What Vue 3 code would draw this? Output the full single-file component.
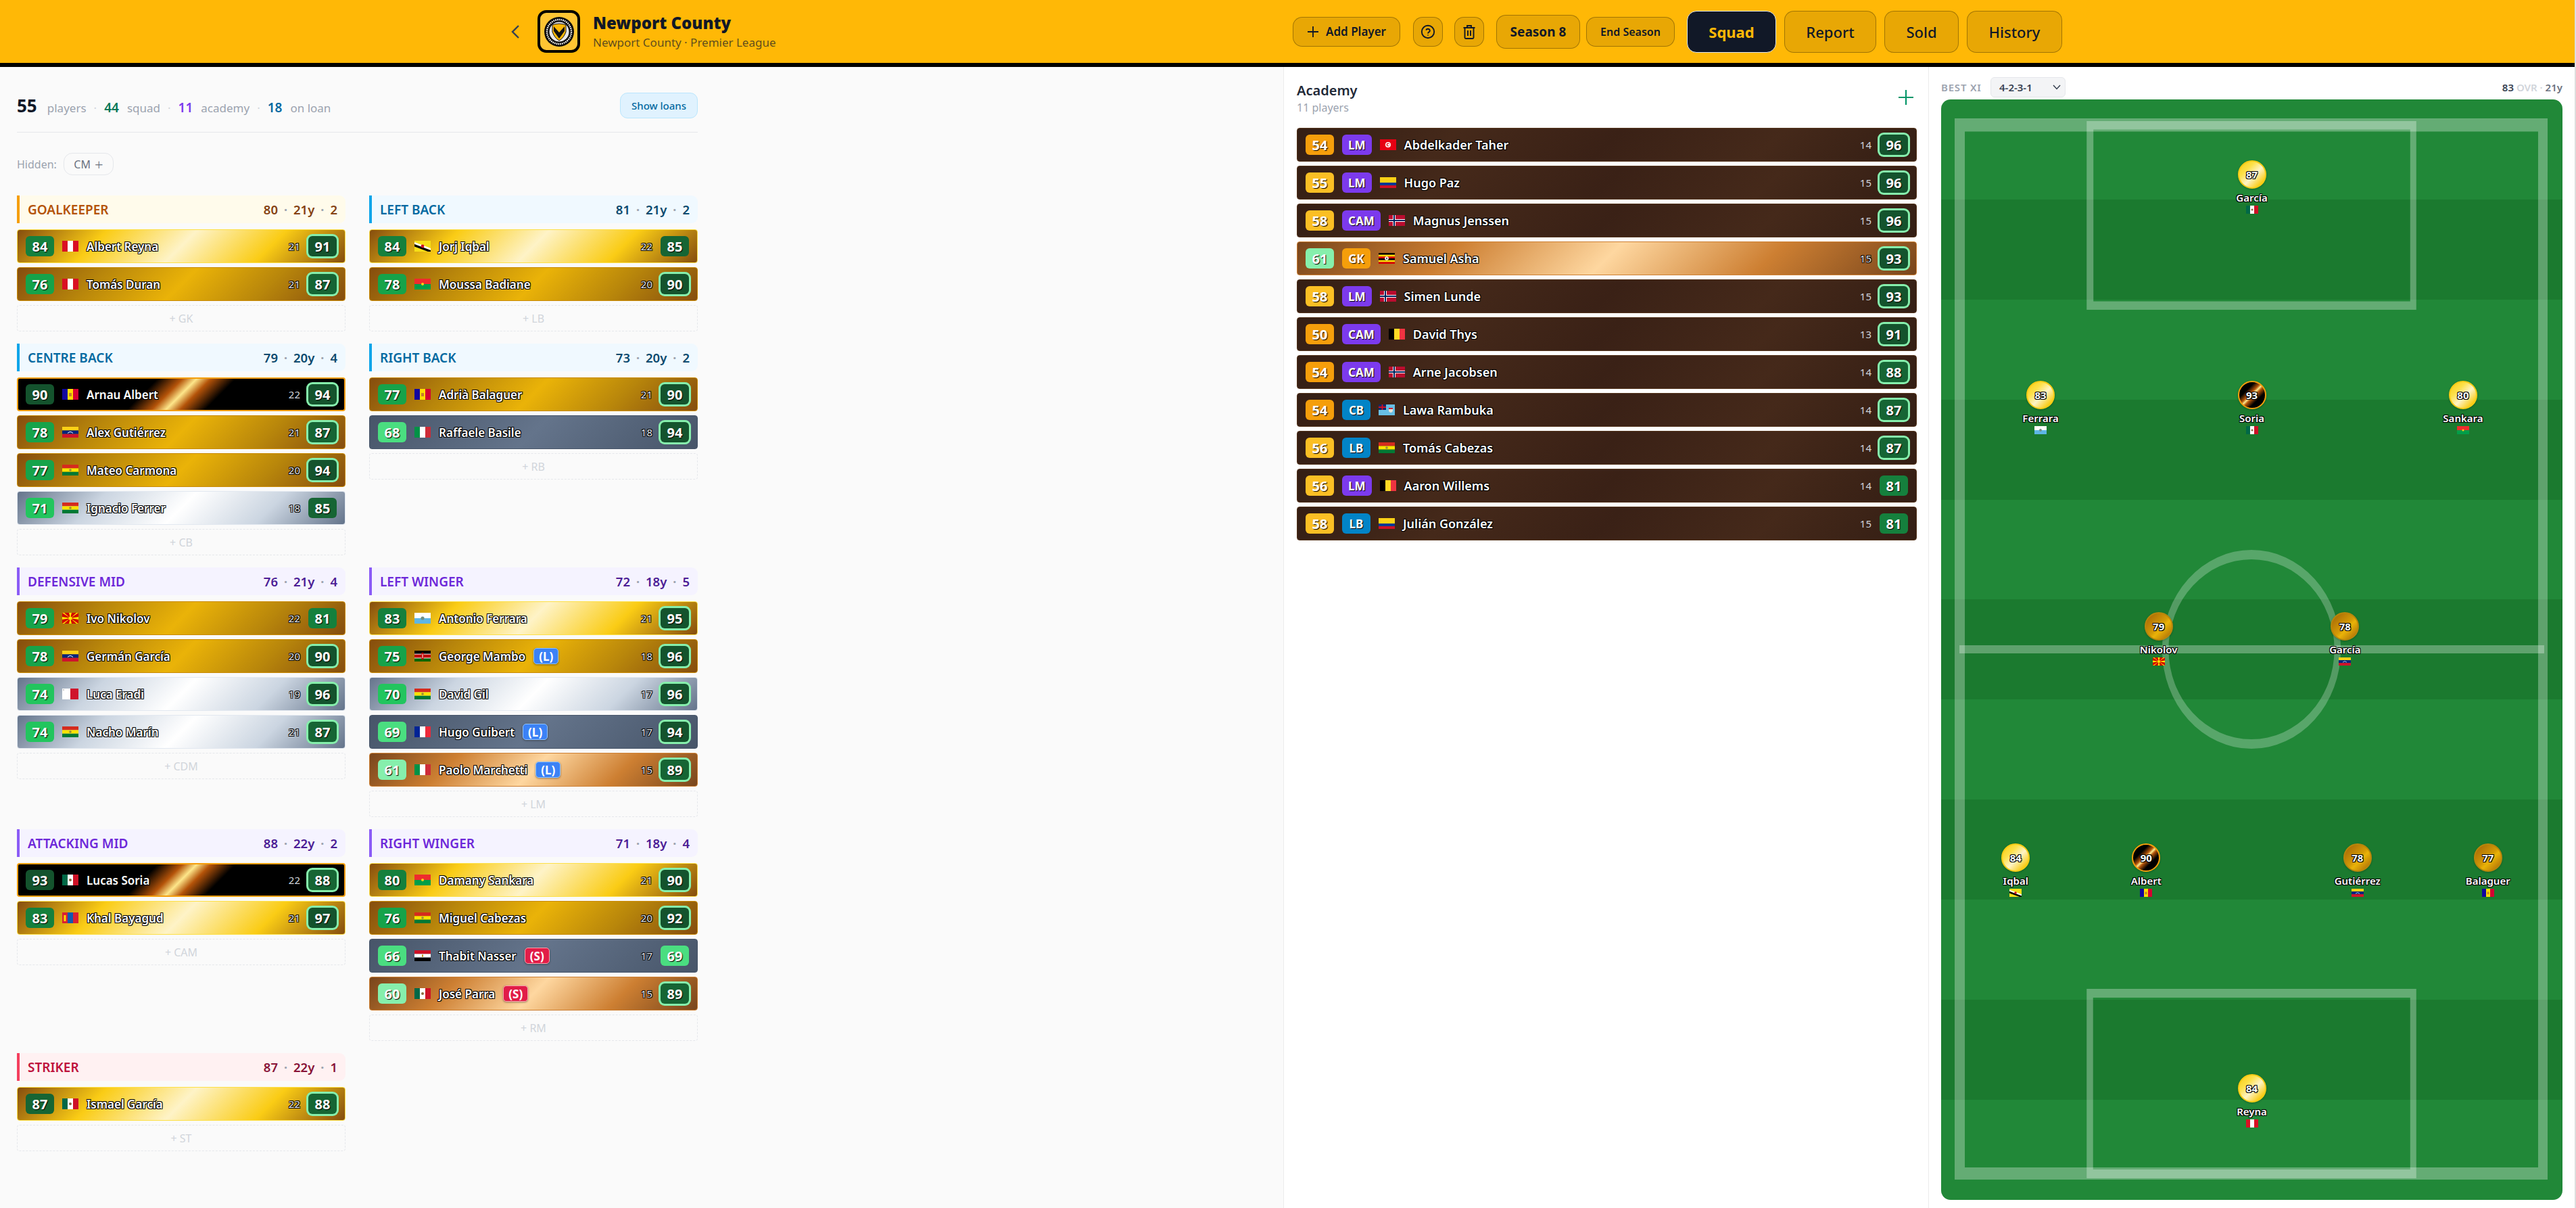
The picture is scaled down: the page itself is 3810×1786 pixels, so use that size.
<script setup>
import { h } from 'vue'

const flagShapes = {
  pe: [['r', 0, 0, 24, 16, '#fff'], ['r', 0, 0, 8, 16, '#d91023'], ['r', 16, 0, 8, 16, '#d91023']],
  it: [['r', 0, 0, 8, 16, '#009246'], ['r', 8, 0, 8, 16, '#fff'], ['r', 16, 0, 8, 16, '#ce2b37']],
  fr: [['r', 0, 0, 8, 16, '#002395'], ['r', 8, 0, 8, 16, '#fff'], ['r', 16, 0, 8, 16, '#ed2939']],
  be: [['r', 0, 0, 8, 16, '#000'], ['r', 8, 0, 8, 16, '#fdda24'], ['r', 16, 0, 8, 16, '#ef3340']],
  mt: [['r', 0, 0, 12, 16, '#fff'], ['r', 12, 0, 12, 16, '#cf142b'], ['r', 1, 1, 2, 2, '#ccc']],
  ad: [['r', 0, 0, 8, 16, '#10069f'], ['r', 8, 0, 8, 16, '#fedd00'], ['r', 16, 0, 8, 16, '#d50032'], ['r', 10, 6, 4, 5, '#c7802a']],
  mx: [['r', 0, 0, 8, 16, '#006847'], ['r', 8, 0, 8, 16, '#fff'], ['r', 16, 0, 8, 16, '#ce1126'], ['c', 12, 8, 2, '#8c6a3f']],
  mn: [['r', 0, 0, 8, 16, '#da2032'], ['r', 8, 0, 8, 16, '#0f5ab0'], ['r', 16, 0, 8, 16, '#da2032'], ['r', 2.5, 4, 3, 9, '#ffd900']],
  bf: [['r', 0, 0, 24, 8, '#ef2b2d'], ['r', 0, 8, 24, 8, '#009e49'], ['c', 12, 8, 2, '#fcd116']],
  bo: [['r', 0, 0, 24, 5.4, '#d52b1e'], ['r', 0, 5.4, 24, 5.3, '#f9e300'], ['r', 0, 10.7, 24, 5.3, '#007934'], ['c', 12, 8, 1.8, '#9a8a3a']],
  ve: [['r', 0, 0, 24, 5.4, '#fcd116'], ['r', 0, 5.4, 24, 5.3, '#00247d'], ['r', 0, 10.7, 24, 5.3, '#cf142b'], ['p', 'M8 9.5 Q12 5.5 16 9.5', 'none', '#fff']],
  co: [['r', 0, 0, 24, 8, '#fcd116'], ['r', 0, 8, 24, 4, '#003893'], ['r', 0, 12, 24, 4, '#ce1126']],
  eg: [['r', 0, 0, 24, 5.4, '#ce1126'], ['r', 0, 5.4, 24, 5.3, '#fff'], ['r', 0, 10.7, 24, 5.3, '#000'], ['r', 11, 6.4, 2, 3.2, '#c09300']],
  sm: [['r', 0, 0, 24, 8, '#fff'], ['r', 0, 8, 24, 8, '#5eb6e4'], ['c', 12, 8, 2.6, '#6f8f86']],
  tn: [['r', 0, 0, 24, 16, '#e70013'], ['c', 12, 8, 4, '#fff'], ['c', 12, 8, 2.4, '#e70013'], ['c', 12.6, 8, 1.6, '#fff']],
  ug: [['r', 0, 0, 24, 2.7, '#000'], ['r', 0, 2.7, 24, 2.7, '#fcdc04'], ['r', 0, 5.4, 24, 2.6, '#d90000'], ['r', 0, 8, 24, 2.7, '#000'], ['r', 0, 10.7, 24, 2.7, '#fcdc04'], ['r', 0, 13.4, 24, 2.6, '#d90000'], ['c', 12, 8, 2.8, '#fff'], ['c', 12, 8, 1.2, '#555']],
  no: [['r', 0, 0, 24, 16, '#ba0c2f'], ['r', 6, 0, 4, 16, '#fff'], ['r', 0, 6, 24, 4, '#fff'], ['r', 7, 0, 2, 16, '#00205b'], ['r', 0, 7, 24, 2, '#00205b']],
  ke: [['r', 0, 0, 24, 16, '#fff'], ['r', 0, 0, 24, 4.6, '#000'], ['r', 0, 5.6, 24, 4.8, '#bb0000'], ['r', 0, 11.4, 24, 4.6, '#006600'], ['r', 10.5, 3, 3, 10, '#bb0000'], ['r', 11.5, 5, 1, 6, '#fff']],
  mk: [['r', 0, 0, 24, 16, '#d20000'], ['p', 'M10 0h4l-2 8zM10 16h4l-2-8zM0 6v4l12-2zM24 6v4L12 8zM0 0h3l9 8zM24 0h-3l-9 8zM0 16h3l9-8zM24 16h-3l-9-8z', '#ffe600'], ['c', 12, 8, 2.6, '#ffe600']],
  bn: [['r', 0, 0, 24, 16, '#f7e017'], ['p', 'M0 2 L24 11 V14 L0 5z', '#fff'], ['p', 'M0 5 L24 14 V16 H20 L0 8.5z', '#000'], ['c', 12, 8, 2.4, '#cf1126']],
  fj: [['r', 0, 0, 24, 16, '#68bfe5'], ['r', 0, 0, 11, 8, '#002868'], ['r', 4.5, 0, 2, 8, '#ce1126'], ['r', 0, 3, 11, 2, '#ce1126'], ['p', 'M15 5h6v5q-3 4-6 0z', '#e8e4d8'], ['r', 15, 5, 6, 1.8, '#ce1126']]
}

const Flag = (props) => h('svg', { class: 'flag', viewBox: '0 0 24 16', preserveAspectRatio: 'none' },
  (flagShapes[props.code] || []).map((s) => {
    if (s[0] === 'r') return h('rect', { x: s[1], y: s[2], width: s[3], height: s[4], fill: s[5] })
    if (s[0] === 'c') return h('circle', { cx: s[1], cy: s[2], r: s[3], fill: s[4] })
    return h('path', { d: s[1], fill: s[2], stroke: s[3] || 'none', 'stroke-width': s[3] ? 1 : 0 })
  })
)

function tier(ovr) {
  if (ovr >= 90) return 'icon'
  if (ovr >= 80) return 'gold'
  if (ovr >= 75) return 'gold-low'
  if (ovr >= 70) return 'silver'
  if (ovr >= 65) return 'silver-low'
  if (ovr >= 60) return 'bronze'
  return 'bronze-low'
}

function ratingColor(v) {
  if (v >= 90) return '#14532d'
  if (v >= 85) return '#166534'
  if (v >= 80) return '#15803d'
  if (v >= 75) return '#16a34a'
  if (v >= 70) return '#22c55e'
  if (v >= 65) return '#4ade80'
  if (v >= 60) return '#86efac'
  if (v >= 55) return '#fbbf24'
  return '#f59e0b'
}

const p = (ovr, name, flag, age, pot, tag, pos) => ({ ovr, name, flag, age, pot, tag, pos })

const sections = [
  { title: 'Goalkeeper', theme: 'amber', avg: 80, age: '21y', n: 2, slot: 'GK', players: [
    p(84, 'Albert Reyna', 'pe', 21, 91), p(76, 'Tomás Duran', 'pe', 21, 87)] },
  { title: 'Left Back', theme: 'sky', avg: 81, age: '21y', n: 2, slot: 'LB', players: [
    p(84, 'Jorj Iqbal', 'bn', 22, 85), p(78, 'Moussa Badiane', 'bf', 20, 90)] },
  { title: 'Centre Back', theme: 'sky', avg: 79, age: '20y', n: 4, slot: 'CB', players: [
    p(90, 'Arnau Albert', 'ad', 22, 94), p(78, 'Alex Gutiérrez', 've', 21, 87),
    p(77, 'Mateo Carmona', 'bo', 20, 94), p(71, 'Ignacio Ferrer', 'bo', 18, 85)] },
  { title: 'Right Back', theme: 'sky', avg: 73, age: '20y', n: 2, slot: 'RB', players: [
    p(77, 'Adrià Balaguer', 'ad', 21, 90), p(68, 'Raffaele Basile', 'it', 18, 94)] },
  { title: 'Defensive Mid', theme: 'violet', avg: 76, age: '21y', n: 4, slot: 'CDM', players: [
    p(79, 'Ivo Nikolov', 'mk', 22, 81), p(78, 'Germán García', 've', 20, 90),
    p(74, 'Luca Eradi', 'mt', 19, 96), p(74, 'Nacho Marín', 'bo', 21, 87)] },
  { title: 'Left Winger', theme: 'violet', avg: 72, age: '18y', n: 5, slot: 'LM', players: [
    p(83, 'Antonio Ferrara', 'sm', 21, 95), p(75, 'George Mambo', 'ke', 18, 96, 'L'),
    p(70, 'David Gil', 'bo', 17, 96), p(69, 'Hugo Guibert', 'fr', 17, 94, 'L'),
    p(61, 'Paolo Marchetti', 'it', 15, 89, 'L')] },
  { title: 'Attacking Mid', theme: 'violet', avg: 88, age: '22y', n: 2, slot: 'CAM', players: [
    p(93, 'Lucas Soria', 'mx', 22, 88), p(83, 'Khal Bayagud', 'mn', 21, 97)] },
  { title: 'Right Winger', theme: 'violet', avg: 71, age: '18y', n: 4, slot: 'RM', players: [
    p(80, 'Damany Sankara', 'bf', 21, 90), p(76, 'Miguel Cabezas', 'bo', 20, 92),
    p(66, 'Thabit Nasser', 'eg', 17, 69, 'S'), p(60, 'José Parra', 'mx', 15, 89, 'S')] },
  { title: 'Striker', theme: 'rose', avg: 87, age: '22y', n: 1, slot: 'ST', players: [
    p(87, 'Ismael García', 'mx', 22, 88)] }
]

const academy = [
  p(54, 'Abdelkader Taher', 'tn', 14, 96, null, 'LM'),
  p(55, 'Hugo Paz', 'co', 15, 96, null, 'LM'),
  p(58, 'Magnus Jenssen', 'no', 15, 96, null, 'CAM'),
  p(61, 'Samuel Asha', 'ug', 15, 93, null, 'GK'),
  p(58, 'Simen Lunde', 'no', 15, 93, null, 'LM'),
  p(50, 'David Thys', 'be', 13, 91, null, 'CAM'),
  p(54, 'Arne Jacobsen', 'no', 14, 88, null, 'CAM'),
  p(54, 'Lawa Rambuka', 'fj', 14, 87, null, 'CB'),
  p(56, 'Tomás Cabezas', 'bo', 14, 87, null, 'LB'),
  p(56, 'Aaron Willems', 'be', 14, 81, null, 'LM'),
  p(58, 'Julián González', 'co', 15, 81, null, 'LB')
]

const posColor = { LM: '#7c3aed', CAM: '#7c3aed', GK: '#f59e0b', CB: '#0284c7', LB: '#0284c7' }

const xi = [
  { name: 'García', ovr: 87, flag: 'mx', x: 50, y: 6.85 },
  { name: 'Ferrara', ovr: 83, flag: 'sm', x: 16, y: 26.85 },
  { name: 'Soria', ovr: 93, flag: 'mx', x: 50, y: 26.85 },
  { name: 'Sankara', ovr: 80, flag: 'bf', x: 84, y: 26.85 },
  { name: 'Nikolov', ovr: 79, flag: 'mk', x: 35, y: 47.85 },
  { name: 'García', ovr: 78, flag: 've', x: 65, y: 47.85 },
  { name: 'Iqbal', ovr: 84, flag: 'bn', x: 12, y: 68.9 },
  { name: 'Albert', ovr: 90, flag: 'ad', x: 33, y: 68.9 },
  { name: 'Gutiérrez', ovr: 78, flag: 've', x: 67, y: 68.9 },
  { name: 'Balaguer', ovr: 77, flag: 'ad', x: 88, y: 68.9 },
  { name: 'Reyna', ovr: 84, flag: 'pe', x: 50, y: 89.85 }
]
</script>

<template>
  <div class="app">
    <header class="topbar">
      <div class="club">
        <svg class="back" viewBox="0 0 12 20" fill="none" stroke="#374151" stroke-width="2.4">
          <path d="M11 1 2 10l9 9" />
        </svg>
        <div class="crest">
          <svg viewBox="0 0 46 46" width="46" height="46">
            <circle cx="23" cy="23" r="22" fill="#0b0b0b" />
            <circle cx="23" cy="23" r="18" fill="none" stroke="#fff" stroke-width="2.4" stroke-dasharray="1.6 1.2" />
            <circle cx="23" cy="23" r="14.5" fill="#e8e8e8" />
            <path d="M13 13q10-4 20 0v10q-3 9-10 13-7-4-10-13z" fill="#ffb806" stroke="#111" stroke-width="1" />
            <path d="M15 15l8 9 8-9v7l-8 11-8-11z" fill="#111" />
          </svg>
        </div>
        <div class="club-text">
          <div class="club-name">Newport County</div>
          <div class="club-sub">Newport County · Premier League</div>
        </div>
      </div>
      <nav class="actions">
        <button class="btn add">
          <svg viewBox="0 0 18 18" width="18" height="18" fill="none" stroke="#111827" stroke-width="1.8"><path d="M9 1v16M1 9h16" /></svg>
          Add Player
        </button>
        <button class="btn square ml7">
          <svg viewBox="0 0 22 22" width="22" height="22" fill="none" stroke="#111827" stroke-width="1.9">
            <circle cx="11" cy="11" r="9.2" />
            <path d="M8.2 8.6a2.9 2.9 0 0 1 5.6.8c0 1.9-2.8 2.3-2.8 4" />
            <path d="M11 15.6v.9" />
          </svg>
        </button>
        <button class="btn square ml5">
          <svg viewBox="0 0 20 22" width="20" height="22" fill="none" stroke="#111827" stroke-width="1.9">
            <path d="M1.5 5h17M7 5V2h6v3M3.5 5v14.5a1.5 1.5 0 0 0 1.5 1.5h10a1.5 1.5 0 0 0 1.5-1.5V5M8 9v8M12 9v8" />
          </svg>
        </button>
        <div class="btn season ml6">Season 8</div>
        <button class="btn end">End Season</button>
        <button class="tab active ml6">Squad</button>
        <button class="tab report">Report</button>
        <button class="tab sold">Sold</button>
        <button class="tab hist">History</button>
      </nav>
    </header>

    <main class="body">
      <section class="squad-panel">
        <div class="squad-inner">
          <div class="summary">
            <div class="counts">
              <b class="total">55</b><span class="lbl">players</span><i class="sep">·</i>
              <b class="c-green">44</b><span class="lbl">squad</span><i class="sep">·</i>
              <b class="c-violet">11</b><span class="lbl">academy</span><i class="sep">·</i>
              <b class="c-blue">18</b><span class="lbl">on loan</span>
            </div>
            <button class="loans">Show loans</button>
          </div>
          <div class="hidden-row">
            <span>Hidden:</span>
            <span class="chip">CM <em>+</em></span>
          </div>
          <div class="grid">
            <div v-for="s in sections" :key="s.title" class="group">
              <div class="group-head" :class="s.theme">
                <span class="group-title">{{ s.title }}</span>
                <span class="group-stats">{{ s.avg }}<i>·</i>{{ s.age }}<i>·</i>{{ s.n }}</span>
              </div>
              <div class="rows">
                <div v-for="pl in s.players" :key="pl.name" class="row" :class="tier(pl.ovr)">
                  <span class="num" :style="{ background: ratingColor(pl.ovr) }">{{ pl.ovr }}</span>
                  <Flag :code="pl.flag" />
                  <span class="name">{{ pl.name }}</span>
                  <span v-if="pl.tag" class="tag" :class="pl.tag === 'L' ? 'loan' : 'sale'">({{ pl.tag }})</span>
                  <span class="age">{{ pl.age }}</span>
                  <span class="num pot" :class="{ ring: pl.pot >= 86 }" :style="{ background: ratingColor(pl.pot) }">{{ pl.pot }}</span>
                </div>
                <div class="slot">+ {{ s.slot }}</div>
              </div>
            </div>
          </div>
        </div>
      </section>

      <section class="academy-panel">
        <div class="academy-head">
          <div>
            <div class="academy-title">Academy</div>
            <div class="academy-sub">11 players</div>
          </div>
          <svg class="academy-add" viewBox="0 0 24 24" width="24" height="24" fill="none" stroke="#059669" stroke-width="2.2"><path d="M12 1v22M1 12h22" /></svg>
        </div>
        <div class="academy-rows">
          <div v-for="pl in academy" :key="pl.name" class="row" :class="tier(pl.ovr)">
            <span class="num" :style="{ background: ratingColor(pl.ovr) }">{{ pl.ovr }}</span>
            <span class="pos" :style="{ background: posColor[pl.pos] }">{{ pl.pos }}</span>
            <Flag :code="pl.flag" />
            <span class="name">{{ pl.name }}</span>
            <span class="age">{{ pl.age }}</span>
            <span class="num pot" :class="{ ring: pl.pot >= 86 }" :style="{ background: ratingColor(pl.pot) }">{{ pl.pot }}</span>
          </div>
        </div>
      </section>

      <section class="xi-panel">
        <div class="xi-head">
          <span class="xi-label">BEST XI</span>
          <div class="formation">
            <span>4-2-3-1</span>
            <svg viewBox="0 0 12 8" width="12" height="8" fill="none" stroke="#374151" stroke-width="1.5"><path d="M1 1l5 5.5L11 1" /></svg>
          </div>
          <span class="xi-stats"><b>83</b> <span class="ovr">OVR</span> <span class="ovr">·</span> <span class="yrs">21y</span></span>
        </div>
        <div class="pitch">
          <svg class="lines" viewBox="0 0 918 1627" preserveAspectRatio="none">
            <path fill-rule="evenodd" d="M20 28H896V1597H20ZM35 47.500V1579H882V47.500Z" />
            <path fill-rule="evenodd" d="M215 32H702V311H215ZM225 44.500V298.500H693V44.500Z" />
            <path fill-rule="evenodd" d="M215 1315H702V1595H215ZM224.500 1328V1582H693V1328Z" />
            <path d="M27 807H891V819H27Z" />
            <path fill-rule="evenodd" class="circle" d="M326.500 813a132 147 0 1 0 264 0a132 147 0 1 0-264 0ZM336 813a122.500 133 0 1 0 245 0a122.500 133 0 1 0-245 0Z" />
          </svg>
          <div v-for="t in xi" :key="t.name + t.ovr" class="token" :style="{ left: t.x + '%', top: t.y + '%' }">
            <div class="coin" :class="tier(t.ovr)"><span>{{ t.ovr }}</span></div>
            <div class="token-name">{{ t.name }}</div>
            <Flag :code="t.flag" />
          </div>
        </div>
      </section>
    </main>
  </div>
</template>

<style>
html, body {
  margin: 0;
  background: #dedede;
}
</style>

<style scoped>
.app {
  width: 3808px;
  height: 1786px;
  display: flex;
  flex-direction: column;
  overflow: hidden;
  font-family: "Noto Sans", "Open Sans", sans-serif;
  background: #fff;
  color: #111827;
}

.topbar {
  height: 93px;
  flex: none;
  box-sizing: content-box;
  border-bottom: 6px solid #000;
  background: #ffb806;
  display: flex;
  align-items: center;
  justify-content: space-between;
  padding: 0 758px 0 756px;
}
.club {
  display: flex;
  align-items: center;
}
.back {
  width: 12px;
  height: 20px;
  margin-right: 27px;
}
.crest {
  width: 63px;
  height: 63px;
  box-sizing: border-box;
  border: 4px solid #000;
  border-radius: 13px;
  background: #ffc533;
  display: flex;
  align-items: center;
  justify-content: center;
  margin-right: 19px;
}
.club-name {
  font-size: 24px;
  font-weight: 900;
  line-height: 30px;
  color: #111827;
}
.club-sub {
  font-size: 17px;
  line-height: 22px;
  margin-top: 3px;
  color: rgba(17, 24, 39, 0.7);
}
.actions {
  display: flex;
  align-items: center;
  gap: 12px;
}
.ml5 { margin-left: 5px; }
.ml6 { margin-left: 6px; }
.ml7 { margin-left: 7px; }
.btn, .tab {
  font-family: inherit;
  box-sizing: border-box;
  background: rgba(0, 0, 0, 0.09);
  border: 1px solid rgba(0, 0, 0, 0.3);
  border-radius: 14px;
  color: #111827;
  display: flex;
  align-items: center;
  justify-content: center;
  padding: 0;
}
.btn {
  height: 44px;
  font-size: 17px;
  font-weight: 600;
}
.add {
  width: 159px;
  gap: 10px;
}
.square {
  width: 44px;
}
.season {
  width: 124px;
  height: 50px;
  font-size: 19px;
  font-weight: 700;
}
.end {
  width: 131px;
  margin-left: -3px;
  font-size: 16px;
}
.tab {
  height: 62px;
  font-size: 22px;
  font-weight: 500;
}
.tab.active {
  width: 132px;
  background: #111827;
  color: #ffb806;
  font-weight: 700;
  border: 1px solid #e5e7eb;
}
.tab.report { width: 136px; }
.tab.sold { width: 110px; }
.tab.hist { width: 141px; }

.body {
  flex: 1;
  display: flex;
  min-height: 0;
}
.squad-panel {
  width: 1899px;
  flex: none;
  box-sizing: border-box;
  background: #fafafa;
  border-right: 1px solid #ececec;
  padding: 38px 0 0 25px;
}
.squad-inner {
  width: 1007px;
}
.summary {
  display: flex;
  align-items: center;
  justify-content: space-between;
  height: 59px;
  padding-bottom: 21px;
  box-sizing: border-box;
  border-bottom: 1px solid #e5e7eb;
}
.counts {
  display: flex;
  align-items: baseline;
  font-size: 17px;
}
.counts b {
  font-weight: 600;
  font-size: 19px;
  margin-right: 12px;
}
.counts .total {
  font-size: 26px;
  font-weight: 700;
  color: #111827;
  margin-right: 15px;
}
.lbl {
  color: #9ca3af;
}
.sep {
  font-style: normal;
  color: #d1d5db;
  margin: 0 11px;
}
.c-green { color: #047857; }
.c-violet { color: #7c3aed; }
.c-blue { color: #0369a1; }
.loans {
  width: 115px;
  height: 38px;
  font-family: inherit;
  font-size: 15px;
  font-weight: 500;
  color: #0369a1;
  background: #e0f2fe;
  border: 1px solid #bae6fd;
  border-radius: 11px;
  padding: 0;
}
.hidden-row {
  display: flex;
  align-items: center;
  gap: 10px;
  margin-top: 30px;
  height: 33px;
  font-size: 16px;
  color: #9ca3af;
}
.chip {
  width: 74px;
  height: 33px;
  box-sizing: border-box;
  border: 1px solid #e5e7eb;
  border-radius: 13px;
  display: flex;
  align-items: center;
  justify-content: center;
  gap: 6px;
  color: #6b7280;
  background: #fafafa;
}
.chip em {
  font-style: normal;
  font-size: 22px;
  line-height: 1;
  font-weight: 300;
}
.grid {
  margin-top: 30px;
  display: grid;
  grid-template-columns: 486px 486px;
  column-gap: 35px;
  row-gap: 18px;
  align-items: start;
}
.group-head {
  height: 41px;
  box-sizing: border-box;
  border-left: 4px solid;
  border-radius: 0 9px 9px 0;
  display: flex;
  align-items: center;
  justify-content: space-between;
  padding: 0 12px 0 12px;
  margin-bottom: 9px;
}
.group-title {
  text-transform: uppercase;
  font-size: 19px;
  font-weight: 600;
}
.group-stats {
  font-size: 18.500px;
  font-weight: 600;
}
.group-stats i {
  font-style: normal;
  color: #9ca3af;
  margin: 0 9px;
  font-weight: 700;
  font-size: 18px;
}
.amber { background: #fffbeb; border-color: #f59e0b; }
.amber .group-title { color: #b45309; }
.amber .group-stats { color: #854213; }
.sky { background: #f0f9ff; border-color: #0ea5e9; }
.sky .group-title { color: #0369a1; }
.sky .group-stats { color: #0c4a6e; }
.violet { background: #f5f3ff; border-color: #8b5cf6; }
.violet .group-title { color: #6d28d9; }
.violet .group-stats { color: #4c1d95; }
.rose { background: #fff1f2; border-color: #f43f5e; }
.rose .group-title { color: #be123c; }
.rose .group-stats { color: #881337; }

.rows, .academy-rows {
  display: flex;
  flex-direction: column;
  gap: 6px;
}
.row {
  height: 50px;
  box-sizing: border-box;
  border: 1px solid;
  border-radius: 4px;
  display: flex;
  align-items: center;
  padding: 0 12px;
  color: #fff;
  flex: none;
}
.row.gold {
  background: linear-gradient(135deg, #854d0e 0%, #facc15 25%, #fef3c7 50%, #facc15 75%, #854d0e 100%);
  border-color: #fde047;
}
.row.gold-low {
  background: linear-gradient(135deg, #854d0e 0%, #b8860b 25%, #eab308 50%, #b8860b 75%, #854d0e 100%);
  border-color: #ca8a04;
}
.row.silver {
  background: linear-gradient(135deg, #64748b 0%, #cbd5e1 25%, #ffffff 50%, #cbd5e1 75%, #64748b 100%);
  border-color: #e2e8f0;
}
.row.silver-low {
  background: linear-gradient(135deg, #475569 0%, #64748b 50%, #475569 100%);
  border-color: #475569;
}
.row.bronze {
  background: linear-gradient(135deg, #78451c 0%, #cd7f32 25%, #fed7a0 50%, #cd7f32 75%, #78451c 100%);
  border-color: #cd7f32;
}
.row.bronze-low {
  background: linear-gradient(135deg, #341e14 0%, #45291a 25%, #3a2116 50%, #45291a 75%, #341e14 100%);
  border-color: #54341c;
}
.row.icon {
  background: linear-gradient(135deg, #000 0%, #000 39%, #b45309 46%, #fde68a 50%, #b45309 54%, #000 61%, #000 100%);
  border: 2px solid #f59e0b;
}
.num {
  flex: none;
  width: 42px;
  height: 30px;
  border-radius: 6px;
  display: flex;
  align-items: center;
  justify-content: center;
  font-size: 20px;
  font-weight: 700;
  color: #fff;
  text-shadow: 1px 1px 1px #000;
}
.row.icon .num:first-child {
  margin-left: -1px;
}
.row.icon .pot {
  margin-right: -1px;
}
.pot {
  margin-left: 12px;
}
.pot.ring {
  box-shadow: 0 0 0 3px #86efac;
}
.pos {
  flex: none;
  height: 30px;
  min-width: 42px;
  box-sizing: border-box;
  padding: 0 9px;
  margin-left: 12px;
  border-radius: 6px;
  display: flex;
  align-items: center;
  justify-content: center;
  font-size: 17px;
  font-weight: 700;
  text-shadow: 1px 1px 1px #000;
}
.flag {
  flex: none;
  width: 24px;
  height: 16px;
  display: block;
  margin-left: 12px;
}
.name {
  margin-left: 12px;
  font-size: 17px;
  font-weight: 600;
  white-space: nowrap;
  color: #fff;
  text-shadow: 1px 1px 0 #000, -1px -1px 0 #000, 1px -1px 0 #000, -1px 1px 0 #000;
}
.academy-rows .name {
  font-size: 18px;
}
.tag {
  margin-left: 12px;
  height: 24px;
  width: 37px;
  border-radius: 5px;
  display: flex;
  align-items: center;
  justify-content: center;
  font-size: 17px;
  font-weight: 700;
  box-sizing: border-box;
  box-shadow: 0 1px 3px rgba(0, 0, 0, 0.4);
}
.tag.loan {
  background: #3b82f6;
  border: 1px solid #93c5fd;
}
.tag.sale {
  background: #e11d48;
  border: 1px solid #fda4af;
}
.age {
  margin-left: auto;
  font-size: 15px;
  color: #e5e7eb;
  text-shadow: 1px 1px 0 #000, -1px -1px 0 #000, 1px -1px 0 #000, -1px 1px 0 #000;
}
.row.icon .age, .row.bronze-low .age {
  text-shadow: none;
  color: #d1d5db;
}
.slot {
  height: 39px;
  box-sizing: border-box;
  border: 1px dashed #e5e7eb;
  border-radius: 4px;
  display: flex;
  align-items: center;
  justify-content: center;
  font-size: 16px;
  color: #d1d5db;
}

.academy-panel {
  width: 954px;
  flex: none;
  box-sizing: border-box;
  border-right: 1px solid #ececec;
  padding: 22px 17px 0 19px;
  background: #fff;
}
.academy-head {
  display: flex;
  align-items: flex-start;
  justify-content: space-between;
  height: 68px;
  padding-right: 4px;
  box-sizing: border-box;
}
.academy-add {
  margin-top: 11px;
}
.academy-title {
  font-size: 20px;
  font-weight: 600;
  line-height: 26px;
  color: #1f2937;
}
.academy-sub {
  font-size: 16px;
  line-height: 24px;
  color: #9ca3af;
}

.xi-panel {
  flex: 1;
  box-sizing: border-box;
  padding: 12px 18px 0 18px;
  background: #fff;
}
.xi-head {
  height: 36px;
  display: flex;
  align-items: center;
  gap: 11px;
  font-size: 15px;
  font-weight: 600;
}
.xi-label {
  width: 62px;
  white-space: nowrap;
  color: #9ca3af;
  letter-spacing: 0.8px;
}
.formation {
  width: 111px;
  height: 30px;
  box-sizing: border-box;
  padding: 0 6px 0 12px;
  border: 1px solid #e5e7eb;
  border-radius: 6px;
  background: #f3f4f6;
  color: #374151;
  display: flex;
  align-items: center;
  justify-content: space-between;
}
.xi-stats {
  margin-left: auto;
  color: #374151;
}
.xi-stats b { font-weight: 600; }
.ovr { color: #d1d5db; }
.yrs { color: #6b7280; }

.pitch {
  position: relative;
  height: 1627px;
  border-radius: 14px;
  overflow: hidden;
  background: repeating-linear-gradient(180deg, #218838 0, #218838 147.900px, #1b7a2f 147.900px, #1b7a2f 295.800px);
}
.lines {
  position: absolute;
  inset: 0;
  width: 100%;
  height: 100%;
}
.lines path {
  fill: rgba(255, 255, 255, 0.3);
}
.lines .circle {
  fill: rgba(255, 255, 255, 0.25);
}
.token {
  position: absolute;
  width: 120px;
  margin-left: -60px;
  margin-top: -21px;
  display: flex;
  flex-direction: column;
  align-items: center;
}
.coin {
  width: 42px;
  height: 42px;
  box-sizing: border-box;
  border-radius: 50%;
  border: 2px solid;
  display: flex;
  align-items: center;
  justify-content: center;
  font-size: 15px;
  font-weight: 700;
  color: #fff;
  text-shadow: 1px 1px 0 #000, -1px -1px 0 #000, 1px -1px 0 #000, -1px 1px 0 #000;
  box-shadow: 0 1px 3px rgba(0, 0, 0, 0.25);
}
.coin.gold {
  background: linear-gradient(135deg, #facc15 0%, #fde047 30%, #fef3c7 55%, #facc15 85%);
  border-color: #facc15;
}
.coin.gold-low {
  background: linear-gradient(135deg, #a16207 0%, #d49a06 50%, #eab308 60%, #a16207 100%);
  border-color: #b8860b;
}
.coin.icon {
  background: linear-gradient(135deg, #000 30%, #b45309 44%, #fde68a 50%, #b45309 56%, #000 70%);
  border-color: #f59e0b;
}
.token-name {
  margin-top: 4px;
  font-size: 15px;
  line-height: 18px;
  font-weight: 600;
  color: #fff;
  white-space: nowrap;
  text-shadow: 1px 1px 0 #000, -1px -1px 0 #000, 1px -1px 0 #000, -1px 1px 0 #000;
}
.token .flag {
  width: 18px;
  height: 12px;
  margin: 3px 0 0;
}
</style>
